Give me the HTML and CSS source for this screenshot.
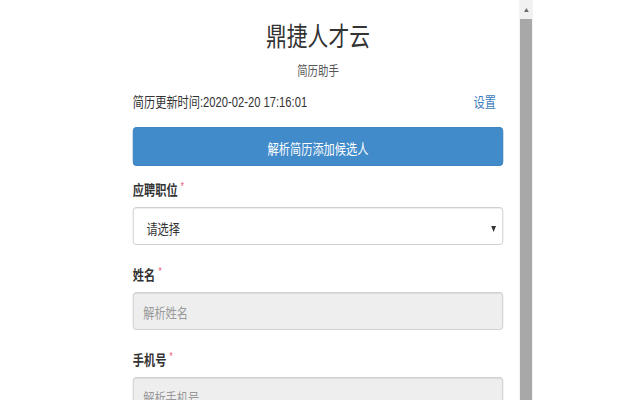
FILE: index.html
```html
<!DOCTYPE html>
<html lang="zh-CN">
<head>
<meta charset="utf-8">
<title>鼎捷人才云 - 简历助手</title>
<link rel="stylesheet" href="styles.css">
</head>
<body>
<div class="stage">
  <div class="popup">
    <h1 class="title">鼎捷人才云</h1>
    <div class="subtitle">简历助手</div>
    <div class="update-row">
      <span class="update-time">简历更新时间:2020-02-20 17:16:01</span>
      <a class="settings" href="#">设置</a>
    </div>
    <button class="btn-primary" type="button">解析简历添加候选人</button>

    <div class="field field-first">
      <label class="field-label">应聘职位<span class="req">*</span></label>
      <div class="select">
        <span class="select-text">请选择</span>
        <span class="select-arrow"></span>
      </div>
    </div>

    <div class="field">
      <label class="field-label">姓名<span class="req">*</span></label>
      <div class="input disabled"><span class="placeholder">解析姓名</span></div>
    </div>

    <div class="field">
      <label class="field-label">手机号<span class="req">*</span></label>
      <div class="input disabled"><span class="placeholder">解析手机号</span></div>
    </div>
  </div>
  <div class="scrollbar">
    <div class="scroll-btn"><span class="scroll-up"></span></div>
    <div class="scroll-thumb"></div>
  </div>
</div>
</body>
</html>
```

FILE: styles.css
```css
html, body {
  margin: 0;
  padding: 0;
  background: #ffffff;
  overflow: hidden;
}

body {
  font-family: "Liberation Sans", "Noto Sans CJK SC", sans-serif;
  font-size: 14px;
  color: #333333;
}

.stage {
  width: 800px;
  height: 400px;
  display: flex;
  padding-left: 148px;
  box-sizing: border-box;
  transform: scaleX(0.8);
  transform-origin: 0 0;
  overflow: hidden;
}

.popup {
  width: 501px;
  box-sizing: border-box;
  padding: 0 20px 0 18px;
  display: flex;
  flex-direction: column;
}

.title {
  margin: 21px 0 0;
  font-size: 26px;
  line-height: 32px;
  font-weight: normal;
  text-align: center;
  color: #333333;
}

.subtitle {
  margin-top: 9px;
  font-size: 13px;
  line-height: 18px;
  text-align: center;
  color: #555555;
}

.update-row {
  margin-top: 12px;
  display: flex;
  justify-content: space-between;
  line-height: 20px;
}

.settings {
  color: #3c7dbd;
  text-decoration: none;
  padding-right: 9px;
}

.btn-primary {
  margin-top: 15px;
  height: 39px;
  box-sizing: border-box;
  padding: 11px 12px 6px;
  border: 1px solid #357ebd;
  border-radius: 4px;
  background: #428bca;
  color: #ffffff;
  font-family: inherit;
  font-size: 14px;
  line-height: 20px;
  text-align: center;
}

.field {
  margin-top: 20px;
  display: flex;
  flex-direction: column;
}

.field-first {
  margin-top: 14px;
}

.field-label {
  font-weight: bold;
  line-height: 20px;
  margin-bottom: 7px;
  color: #333333;
}

.req {
  color: #ee4d6e;
  font-size: 10px;
  font-weight: normal;
  margin-left: 4px;
  vertical-align: top;
  line-height: 14px;
}

.select,
.input {
  height: 38px;
  box-sizing: border-box;
  border: 1px solid #cccccc;
  border-radius: 4px;
  line-height: 20px;
  box-shadow: inset 0 1px 1px rgba(0, 0, 0, 0.075);
}

.select {
  background: #ffffff;
  display: flex;
  align-items: flex-start;
  justify-content: space-between;
  padding: 11px 8px 5px 16px;
}

.select-arrow {
  margin-top: 7px;
  width: 0;
  height: 0;
  border-left: 3px solid transparent;
  border-right: 3px solid transparent;
  border-top: 6px solid #333333;
}

.input {
  padding: 10px 12px 6px;
}

.input.disabled {
  background: #eeeeee;
}

.placeholder {
  color: #999999;
}

.scrollbar {
  width: 17px;
  height: 400px;
  background: #f1f1f1;
  display: flex;
  flex-direction: column;
}

.scroll-btn {
  height: 17px;
  display: flex;
  align-items: center;
  justify-content: center;
  padding-top: 2px;
  box-sizing: border-box;
}

.scroll-up {
  width: 0;
  height: 0;
  border-left: 3px solid transparent;
  border-right: 3px solid transparent;
  border-bottom: 4px solid #6e6e6e;
}

.scroll-thumb {
  flex: 1;
  margin: 2px 1px 0;
  background: #a8a8a8;
}
```
